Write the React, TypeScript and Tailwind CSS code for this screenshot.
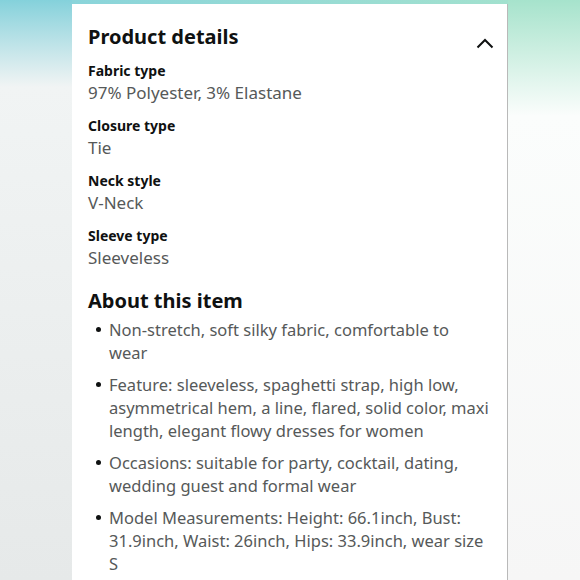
const DETAILS = [
  { label: "Fabric type", value: "97% Polyester, 3% Elastane" },
  { label: "Closure type", value: "Tie" },
  { label: "Neck style", value: "V-Neck" },
  { label: "Sleeve type", value: "Sleeveless" },
];

const BULLETS = [
  "Non-stretch, soft silky fabric, comfortable to wear",
  "Feature: sleeveless, spaghetti strap, high low, asymmetrical hem, a line, flared, solid color, maxi length, elegant flowy dresses for women",
  "Occasions: suitable for party, cocktail, dating, wedding guest and formal wear",
  "Model Measurements: Height: 66.1inch, Bust: 31.9inch, Waist: 26inch, Hips: 33.9inch, wear size S",
];

export default function App() {
  return (
    <div
      className="flex h-[580px] w-[580px] overflow-hidden bg-gradient-to-r from-[#86d2dc] to-[#a6e3cc]"
      style={{ fontFamily: '"Noto Sans", "Open Sans", sans-serif' }}
    >
      <div className="w-[72px] shrink-0 bg-gradient-to-b from-[#84d1db] via-[#f1f4f4] via-[15%] to-[#e6e9e9]" />

      <div className="mt-[4px] w-[436px] shrink-0 border-r border-[#b9b9b9] bg-white pl-[16px] pr-[14px] text-[#0f1111]">
        <div className="flex items-start justify-between pt-[20px]">
          <h2 className="text-[20px] font-bold leading-[26px]">Product details</h2>
          <svg className="mr-[-1px] mt-[14px]" width="18" height="11" viewBox="0 0 18 11" fill="none">
            <polyline points="1.5,9.5 9,2 16.5,9.5" stroke="#0f1111" strokeWidth="2" />
          </svg>
        </div>

        <div className="mt-[10px] flex flex-col gap-[11px]">
          {DETAILS.map((d) => (
            <div key={d.label}>
              <div className="text-[14px] font-bold leading-[22px]">{d.label}</div>
              <div className="text-[17px] leading-[22px] text-[#565959]">{d.value}</div>
            </div>
          ))}
        </div>

        <h2 className="mt-[19px] text-[20px] font-bold leading-[26px]">About this item</h2>

        <ul className="mt-[4px] flex flex-col gap-[9px] pl-[21px]">
          {BULLETS.map((b) => (
            <li key={b} className="relative pr-[4px] text-[16.5px] leading-[23px] text-[#565959]">
              <span className="absolute left-[-13px] top-[9px] h-[5px] w-[5px] rounded-full bg-[#0f1111]" />
              {b}
            </li>
          ))}
        </ul>
      </div>

      <div className="flex-1 bg-gradient-to-b from-[#a6e3cc] via-[#fbfdfc] via-[20%] to-[#f6f6f6]" />
    </div>
  );
}
